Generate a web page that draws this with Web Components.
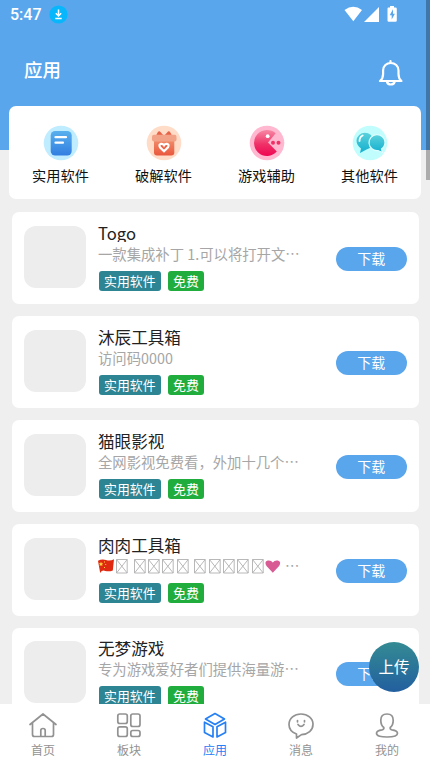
<!DOCTYPE html>
<html lang="zh-CN">
<head>
<meta charset="utf-8">
<title>应用</title>
<style>
html,body{margin:0;height:100%;overflow:hidden}
body{font-family:"Noto Sans CJK SC",sans-serif;background:#efefef}
</style>
</head>
<body>
<app-screen></app-screen>
<script>
const define = (name, html, setup) => customElements.define(name, class extends HTMLElement {
  constructor() {
    super();
    const t = document.createElement('template');
    t.innerHTML = html;
    this.attachShadow({mode: 'open'}).append(t.content.cloneNode(true));
  }
  connectedCallback() { if (setup) setup(this, this.shadowRoot); }
});

define('status-bar', `
<style>
:host{display:flex;align-items:center;height:30px;padding:0 32px 0 10px;color:#fff;font:500 16px/30px Roboto,sans-serif}
svg{display:block}
.dl{margin-left:7px;margin-bottom:1px}
.right{margin-left:auto;margin-bottom:2px}
</style>
<span>5:47</span>
<svg class="dl" width="19" height="19" viewBox="0 0 19 19"><circle cx="9.5" cy="9.5" r="9.1" fill="#08b7fb"/><path d="M9.5 4.500v6M6.800 8.300l2.700 2.700 2.700-2.700M6.300 13.400h6.400" fill="none" stroke="#fff" stroke-width="1.500"/></svg>
<svg class="right" width="54" height="18" viewBox="344 5 54 18" fill="#fff"><path d="M344.500 10Q353.300 3.500 362 10L353.300 21.300zM364 22L379 7V22z"/><path fill-rule="evenodd" d="M388.500 7.500h1.500V6h4v1.500h1.500q1.300 0 1.300 1.300v11.700q0 1.300-1.300 1.300h-6.700q-1.300 0-1.300-1.300V8.800q0-1.300 1-1.300zM393 9.200l-3.300 6h2v4.300l3.200-5.700h-1.900z"/></svg>`);

define('app-header', `
<style>
:host{display:block;height:150px;background:#59a6ed}
.bar{display:flex;justify-content:space-between;align-items:center;height:80px;padding:0 25px 0 24px}
h1{margin:0 0 2px;color:#fff;font-size:18.500px;font-weight:500;line-height:28px}
svg{margin-top:6px}
</style>
<status-bar></status-bar>
<div class="bar"><h1><slot></slot></h1>
<svg width="28" height="28" viewBox="0 0 28 28" fill="none" stroke="#fff" stroke-width="2.200" stroke-linejoin="round" stroke-linecap="round"><path d="M13.500 2v2M3 22h21.500c-1.900-1.500-3-4-3-7V11.500c0-4.500-3.500-7.500-7.700-7.500s-7.700 3-7.700 7.500V15c0 3-1.200 5.500-3.100 7zM10 23c1.200 3.300 6.400 3.300 7.600 0"/></svg></div>`);

const categoryIcons = {
  doc: `<defs><linearGradient id="g" x2="0" y2="1"><stop stop-color="#59b0ed"/><stop offset="1" stop-color="#327ee1"/></linearGradient></defs><circle cx="18" cy="18" r="17.300" fill="#bfecff"/><rect x="7.700" y="6" width="21" height="24.500" rx="4.500" fill="url(#g)"/><path d="M12.500 12.200h10.500M12.500 17.700h7.500" stroke="#fff" stroke-width="2.200" stroke-linecap="round"/>`,
  gift: `<defs><linearGradient id="g" x2="0" y2="1"><stop stop-color="#f19471"/><stop offset="1" stop-color="#e9573d"/></linearGradient></defs><circle cx="18" cy="18" r="17.300" fill="#ffdcc7"/><path d="M10 11q2-6 4-4.500L18 11l4-4.500q2-1.500 4 4.500z" fill="#e76348"/><rect x="8" y="13" width="20.300" height="17.500" rx="3" fill="url(#g)"/><rect x="6" y="9.800" width="24.500" height="6.700" rx="2" fill="#f1a287"/><path d="M18 26.300l-4-4q-1.500-3 1-3.500 2-.2 3 1.500 1-1.700 3-1.500 2.500.5 1 3.500z" fill="#ec6245" stroke="#fff" stroke-width="2.200"/>`,
  game: `<defs><linearGradient id="g" x2="0" y2="1"><stop stop-color="#f789a5"/><stop offset=".55" stop-color="#ef3168"/><stop offset="1" stop-color="#ef0753"/></linearGradient></defs><circle cx="18" cy="18" r="17.300" fill="#ffb8cf"/><path d="M26.700 8.200A13 13 0 1 0 27.800 26.500L19 17.500z" fill="url(#g)"/><circle cx="18.700" cy="11.200" r="1.900" fill="#fff"/><circle cx="24" cy="17.700" r="2" fill="#ef3168"/><circle cx="29.500" cy="17.700" r="2" fill="#ef3168"/>`,
  chat: `<defs><linearGradient id="g" x2="0" y2="1"><stop stop-color="#5bd2dc"/><stop offset="1" stop-color="#12afcf"/></linearGradient></defs><circle cx="18" cy="18" r="17.300" fill="#c2fdfd"/><path d="M8 28l1-4.500Q4.500 20 4.500 15.500A8.500 8.500 0 1 1 14.500 24.500z" fill="url(#g)"/><path d="M7.500 16q0-4 3.200-5.500" fill="none" stroke="#fff" stroke-width="1.800" stroke-linecap="round"/><path d="M30.500 27.500l-1-3.500q3.500-2.500 3.500-6.500a8 8 0 1 0-7 8z" fill="url(#g)" stroke="#dffdff" stroke-width="1.200"/>`
};
define('category-item', `
<style>
:host{display:flex;flex-direction:column;align-items:center;color:#111;font-size:14.200px;line-height:22px;gap:3.300px}
svg{display:block;width:36px;height:36px}
</style><svg viewBox="0 0 36 36"></svg><span><slot></slot></span>`,
(el, root) => { root.querySelector('svg').innerHTML = categoryIcons[el.getAttribute('icon')]; });

define('category-card', `
<style>:host{display:grid;grid-template-columns:repeat(4,1fr);box-sizing:border-box;margin:-44px 9px 0;height:93px;padding-top:18.700px;background:#fff;border-radius:7px}</style><slot></slot>`);

define('app-tag', `
<style>:host{display:block;height:20px;padding:0 5.500px;border-radius:3px;background:#2d8493;color:#fff;font-size:12.900px;line-height:20px}:host([free]){background:#20ad3d}</style><slot></slot>`);

define('pill-button', `
<style>:host{display:block;width:71.500px;height:24px;border-radius:12px;background:#59a6ed;color:#fff;font-size:14px;line-height:23px;text-align:center}</style><slot></slot>`);

define('emoji-line', `
<style>:host{display:flex;height:20px;align-items:center}svg{display:block}span{margin-left:3px}</style>
<svg width="184" height="18" viewBox="0 0 184 18"><path d="M0 3.800Q4 1.500 8 3t8-.8L14.800 13.500q-4 1.500-7.500.4T2.200 16z" fill="#df2910"/><path d="M3 4.800l.7 1.500 1.500.2-1.100 1 .3 1.600L3 8.300l-1.400.8.3-1.600-1.100-1 1.500-.2zM6 4.500h1v1H6zM7.200 7h1v1h-1zM6 10h1v1H6z" fill="#ffd43b"/><g class="boxes" fill="none" stroke="#b0b0b0" stroke-width=".9"></g><path d="M175.500 15.800L169.200 9Q166.500 4.500 170.500 3.500q3.300-.5 5 2 1.700-2.500 5-2 4 1 1.300 5.500z" fill="#d95b94" transform="translate(-.7)"/></svg><span>…</span>`,
(el, root) => {
  root.querySelector('.boxes').innerHTML = [18.500,36.500,50.500,64.500,79.500,96.500,111.500,125.500,139.500,154.500]
    .map(x => `<path d="M${x} 2.500h10.700v13.500h-10.700zl10.700 13.500m0-13.500l-10.700 13.500"/>`).join('');
});

define('app-card', `
<style>
:host{display:flex;box-sizing:border-box;height:91.700px;padding:13.500px 12px 0;background:#fff;border-radius:7px}
.thumb{width:62px;height:62px;border-radius:12px;background:#ededed;flex:none}
.info{margin-left:12px;width:203px;display:flex;flex-direction:column}
.title{height:16px;margin-bottom:2px;overflow:hidden;font-size:16.600px;line-height:14px;color:#222;white-space:nowrap}
.desc{height:20px;font-size:14.350px;line-height:20px;color:#a6a6a6;white-space:nowrap}
.tags{display:flex;gap:6.500px;margin:7px 0 0 .5px}
pill-button{margin:21px 0 0 auto}
</style>
<div class="thumb"></div>
<div class="info"><div class="title"><slot name="title"></slot></div><div class="desc"><slot></slot></div>
<div class="tags"><app-tag>实用软件</app-tag><app-tag free>免费</app-tag></div></div>
<pill-button>下载</pill-button>`);

define('app-list', `<style>:host{display:flex;flex-direction:column;gap:12.200px;padding:13.400px 11px 0 12px}</style><slot></slot>`);

const navIcons = {
  home: `<path d="M2 13.500L15 3l13 10.500M4.500 12v11.500q0 2 2 2h17q2 0 2-2V12M12.800 25.500v-6q0-2 2.200-2t2.200 2v6"/>`,
  blocks: `<rect x="3.800" y="3" width="9.500" height="9.500" rx="2"/><rect x="16.800" y="3" width="9.200" height="12.500" rx="2"/><rect x="3.800" y="15.800" width="9.500" height="9.700" rx="2"/><rect x="16.800" y="19.500" width="9.200" height="6" rx="2"/>`,
  cube: `<path d="M15 2.500l9.500 5.400-9.500 5.600-9.500-5.600zM4.500 11.200l8.500 4.500V26l-8.500-4.500zM25.500 11.200L17 15.700V26l8.500-4.500z"/>`,
  message: `<path d="M10.500 27v-4Q3 20.300 3 13.500C3 7.300 8.400 3 15 3s12 4.300 12 10.300-5 10-11.500 10.300zM12 13.500q3 3.800 6 0M11.500 9.500v1.300M18.500 9.500v1.300"/>`,
  user: `<path d="M11.800 16.500C9.500 14.800 8.800 11.500 8.800 9.200 8.800 5 11.500 3 15 3s6.200 2 6.200 6.200c0 2.300-.7 5.600-3 7.300q-.5 1.800 1.800 2.300 5.500.8 5.500 3.500c0 3-5 3.700-10.500 3.700S4.500 25.300 4.500 22.300q0-2.700 5.500-3.500 2.300-.5 1.800-2.300z"/>`
};
define('nav-item', `
<style>
:host{display:flex;flex-direction:column;align-items:center;color:#929292;font-size:12px;line-height:18px;padding-top:6.700px}
:host([active]){color:#2680f5}
svg{display:block;width:30px;height:30px;fill:none;stroke:currentColor;stroke-width:1.700;stroke-linejoin:round;stroke-linecap:round}
</style><svg viewBox="0 0 30 30"></svg><span><slot></slot></span>`,
(el, root) => { root.querySelector('svg').innerHTML = navIcons[el.getAttribute('icon')]; });

define('bottom-nav', `<style>:host{display:grid;grid-template-columns:repeat(5,1fr);height:60px;background:#fff}</style><slot></slot>`);

define('app-screen', `
<style>
:host{display:grid;grid-template-rows:1fr 60px;width:430px;height:764px;position:relative;overflow:hidden;background:#efefef}
main{overflow:hidden;min-height:0}
.upload{position:absolute;left:369px;top:642px;width:50px;height:50px;border-radius:50%;background:linear-gradient(#348b93,#225f9f);color:#fff;font-size:15.500px;line-height:49px;text-align:center}
.scroll{position:absolute;right:0;top:0;width:4px;height:180px;background:rgba(0,0,0,.28)}
</style>
<main>
<app-header>应用</app-header>
<category-card><category-item icon="doc">实用软件</category-item><category-item icon="gift">破解软件</category-item><category-item icon="game">游戏辅助</category-item><category-item icon="chat">其他软件</category-item></category-card>
<app-list>
<app-card><span slot="title">Togo</span>一款集成补丁 1.可以将打开文…</app-card>
<app-card><span slot="title">沐辰工具箱</span>访问码0000</app-card>
<app-card><span slot="title">猫眼影视</span>全网影视免费看，外加十几个…</app-card>
<app-card><span slot="title">肉肉工具箱</span><emoji-line></emoji-line></app-card>
<app-card><span slot="title">无梦游戏</span>专为游戏爱好者们提供海量游…</app-card>
</app-list>
</main>
<bottom-nav><nav-item icon="home">首页</nav-item><nav-item icon="blocks">板块</nav-item><nav-item icon="cube" active>应用</nav-item><nav-item icon="message">消息</nav-item><nav-item icon="user">我的</nav-item></bottom-nav>
<div class="upload">上传</div>
<div class="scroll"></div>`);
</script>
</body>
</html>
